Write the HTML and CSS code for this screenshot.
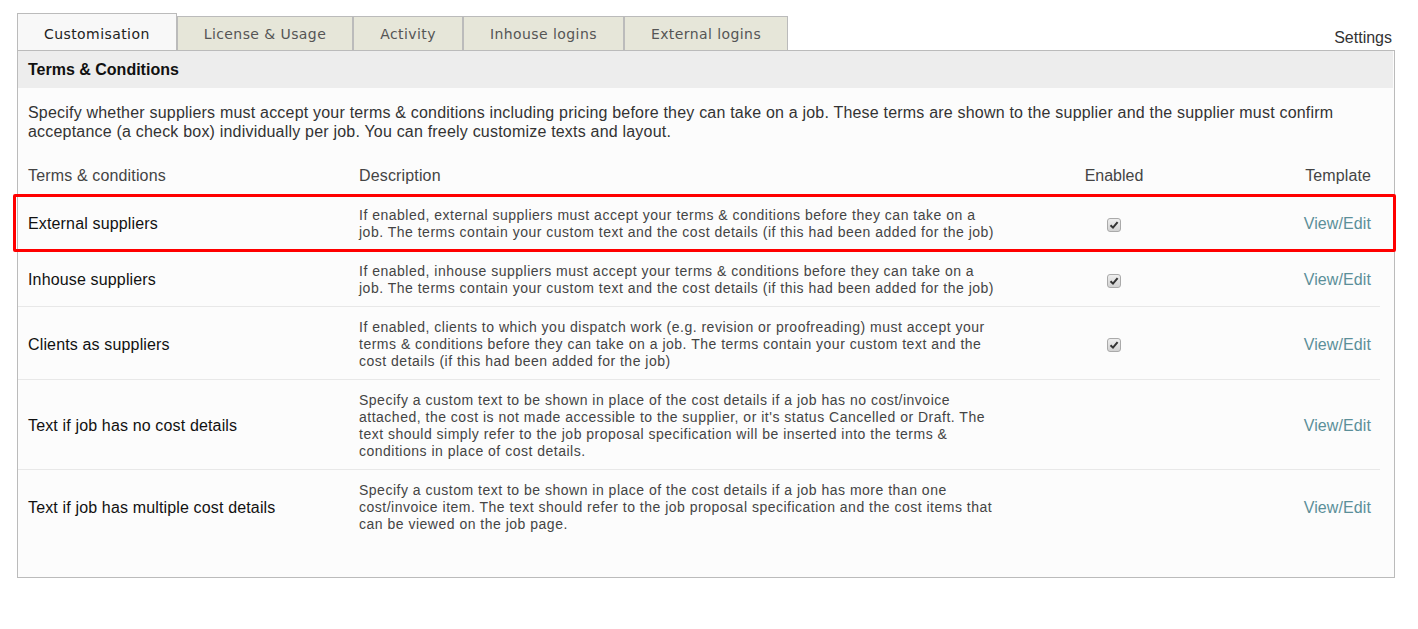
FILE: index.html
```html
<!DOCTYPE html>
<html>
<head>
<meta charset="utf-8">
<link rel="stylesheet" href="styles.css">
</head>
<body>
<div class="page">
  <div class="topbar">
    <ul class="tabs">
      <li class="tab active">Customisation</li>
      <li class="tab">License &amp; Usage</li>
      <li class="tab">Activity</li>
      <li class="tab">Inhouse logins</li>
      <li class="tab">External logins</li>
    </ul>
    <div class="settings">Settings</div>
  </div>
  <div class="panel">
    <div class="panel-head">Terms &amp; Conditions</div>
    <p class="intro">Specify whether suppliers must accept your terms &amp; conditions including pricing before they can take on a job. These terms are shown to the supplier and the supplier must confirm acceptance (a check box) individually per job. You can freely customize texts and layout.</p>
    <div class="table">
      <div class="row head">
        <div class="c-name">Terms &amp; conditions</div>
        <div class="c-desc">Description</div>
        <div class="c-en">Enabled</div>
        <div class="c-tpl">Template</div>
      </div>
      <div class="row highlighted">
        <div class="c-name">External suppliers</div>
        <div class="c-desc">If enabled, external suppliers must accept your terms &amp; conditions before they can take on a job. The terms contain your custom text and the cost details (if this had been added for the job)</div>
        <div class="c-en"><span class="check"><svg viewBox="0 0 10 10" width="10" height="10"><path d="M1.5 5.2 L4 7.6 L8.6 2.2" fill="none" stroke="#333" stroke-width="2"/></svg></span></div>
        <div class="c-tpl"><span class="link">View/Edit</span></div>
      </div>
      <div class="row">
        <div class="c-name">Inhouse suppliers</div>
        <div class="c-desc">If enabled, inhouse suppliers must accept your terms &amp; conditions before they can take on a job. The terms contain your custom text and the cost details (if this had been added for the job)</div>
        <div class="c-en"><span class="check"><svg viewBox="0 0 10 10" width="10" height="10"><path d="M1.5 5.2 L4 7.6 L8.6 2.2" fill="none" stroke="#333" stroke-width="2"/></svg></span></div>
        <div class="c-tpl"><span class="link">View/Edit</span></div>
      </div>
      <div class="row">
        <div class="c-name">Clients as suppliers</div>
        <div class="c-desc">If enabled, clients to which you dispatch work (e.g. revision or proofreading) must accept your terms &amp; conditions before they can take on a job. The terms contain your custom text and the cost details (if this had been added for the job)</div>
        <div class="c-en"><span class="check"><svg viewBox="0 0 10 10" width="10" height="10"><path d="M1.5 5.2 L4 7.6 L8.6 2.2" fill="none" stroke="#333" stroke-width="2"/></svg></span></div>
        <div class="c-tpl"><span class="link">View/Edit</span></div>
      </div>
      <div class="row">
        <div class="c-name">Text if job has no cost details</div>
        <div class="c-desc">Specify a custom text to be shown in place of the cost details if a job has no cost/invoice attached, the cost is not made accessible to the supplier, or it's status Cancelled or Draft. The text should simply refer to the job proposal specification will be inserted into the terms &amp; conditions in place of cost details.</div>
        <div class="c-en"></div>
        <div class="c-tpl"><span class="link">View/Edit</span></div>
      </div>
      <div class="row last">
        <div class="c-name">Text if job has multiple cost details</div>
        <div class="c-desc">Specify a custom text to be shown in place of the cost details if a job has more than one cost/invoice item. The text should refer to the job proposal specification and the cost items that can be viewed on the job page.</div>
        <div class="c-en"></div>
        <div class="c-tpl"><span class="link">View/Edit</span></div>
      </div>
    </div>
  </div>
</div>
</body>
</html>
```

FILE: styles.css
```css
html, body {
  margin: 0;
  padding: 0;
  background: #fff;
}
.page {
  padding: 13px 23px 0 17px;
  font-family: "Liberation Sans", Arial, sans-serif;
}
.topbar {
  display: flex;
  align-items: flex-end;
}
.tabs {
  list-style: none;
  margin: 0;
  padding: 0;
  display: flex;
  align-items: flex-end;
}
.tab {
  font-family: "DejaVu Sans", Verdana, sans-serif;
  font-size: 14px;
  letter-spacing: 0.42px;
  color: #555;
  background: #e6e6d9;
  border: 1px solid #bbb;
  border-bottom: none;
  height: 34px;
  line-height: 34px;
  padding: 0 26px;
  box-sizing: border-box;
}
.tab.active {
  height: 37px;
  line-height: 40px;
  background: #f8f8f8;
  color: #222;
}
.settings {
  margin-left: auto;
  margin-right: 3px;
  font-size: 16px;
  color: #333;
  padding-bottom: 3px;
}
.panel {
  border: 1px solid #bbb;
  background: #fcfcfc;
  height: 528px;
  box-sizing: border-box;
}
.panel-head {
  background: #ededed;
  height: 37px;
  line-height: 37px;
  padding-left: 10px;
  font-weight: bold;
  font-size: 16px;
  color: #111;
  margin-right: 1px;
}
.intro {
  margin: 15px 10px 0 10px;
  font-size: 16px;
  letter-spacing: 0.2px;
  line-height: 19px;
  color: #333;
}
.table {
  margin-right: 14px;
}
.row {
  display: grid;
  grid-template-columns: 331px 660px 210px 1fr;
  align-items: center;
  border-bottom: 1px solid #e8e8e8;
  padding: 12px 0 9px;
  position: relative;
}
.row.head {
  border-bottom: none;
  padding: 25px 0 10px;
  color: #444;
  font-size: 16px;
}
.row.last {
  border-bottom: none;
}
.c-name {
  padding-left: 10px;
  font-size: 16px;
  letter-spacing: 0.15px;
  color: #111;
}
.row.head .c-name { color: #444; }
.c-desc {
  padding: 0 10px 0 10px;
  font-size: 14px;
  letter-spacing: 0.5px;
  line-height: 17px;
  color: #444;
}
.row.head .c-desc { font-size: 16px; line-height: 19px; letter-spacing: 0.15px; }
.c-en {
  text-align: center;
  font-size: 16px;
}
.c-tpl {
  text-align: right;
  padding-right: 9px;
  font-size: 16px;
  letter-spacing: 0.1px;
}
.link {
  color: #5b8f99;
}
.check {
  display: inline-flex;
  align-items: center;
  justify-content: center;
  width: 14px;
  height: 14px;
  border: 1px solid #aaa;
  border-radius: 3px;
  background: linear-gradient(#eee, #d2d2d2);
  box-sizing: border-box;
  vertical-align: middle;
}
.highlighted::after {
  content: "";
  position: absolute;
  left: -5px;
  right: -16px;
  top: -1px;
  bottom: -2px;
  border: 3px solid #f00;
  border-radius: 2px;
  pointer-events: none;
}
```
